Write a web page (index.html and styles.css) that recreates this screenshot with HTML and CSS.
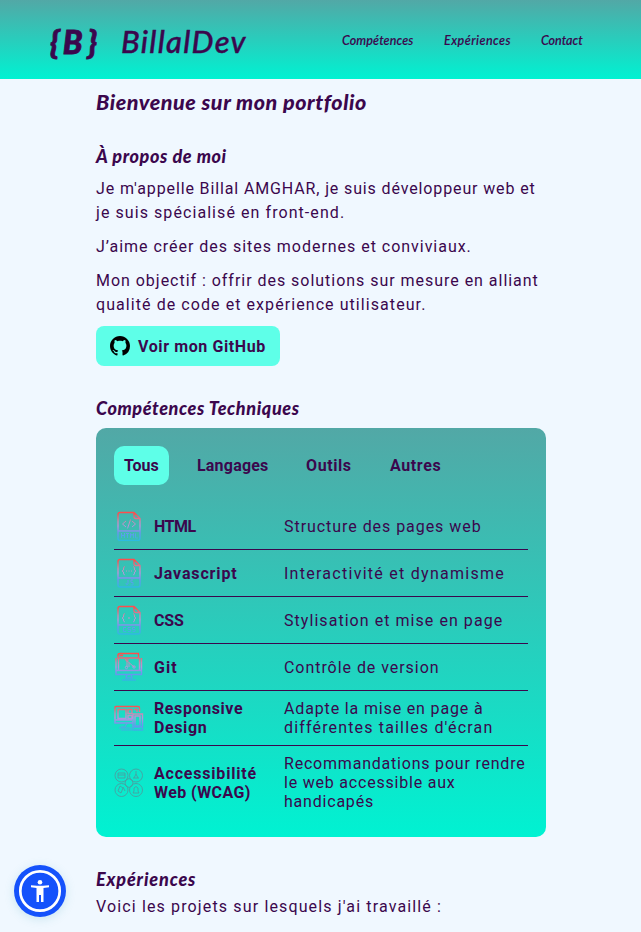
FILE: index.html
```html
<!DOCTYPE html>
<html lang="fr">
<head>
<meta charset="utf-8">
<title>BillalDev</title>
<link rel="stylesheet" href="styles.css">
</head>
<body>
<header class="header">
  <div class="brand"><span class="logo">{<span class="logo-b">B</span>}</span><span class="name">BillalDev</span></div>
  <nav class="nav"><a class="nav-skills">Compétences</a><a class="nav-exp">Expériences</a><a class="nav-contact">Contact</a></nav>
</header>
<main class="main">
  <h1 class="title">Bienvenue sur mon portfolio</h1>
  <section class="about">
    <h2 class="h-about">À propos de moi</h2>
    <p>Je m'appelle Billal AMGHAR, je suis développeur web et<br><span class="wide">je suis spécialisé en front-end.</span></p>
    <p class="mid">J’aime créer des sites modernes et conviviaux.</p>
    <p class="mid">Mon objectif : offrir des solutions sur mesure en alliant<br><span class="wide">qualité de code et expérience utilisateur.</span></p>
    <a class="github"><svg width="20" height="20" viewBox="0 0 16 16"><path d="M8 0C3.58 0 0 3.58 0 8c0 3.54 2.29 6.53 5.47 7.59.4.07.55-.17.55-.38 0-.19-.01-.82-.01-1.49-2.01.37-2.53-.49-2.69-.94-.09-.23-.48-.94-.82-1.13-.28-.15-.68-.52-.01-.53.63-.01 1.08.58 1.23.82.72 1.21 1.87.87 2.33.66.07-.52.28-.87.51-1.07-1.78-.2-3.64-.89-3.64-3.95 0-.87.31-1.59.82-2.15-.08-.2-.36-1.02.08-2.12 0 0 .67-.21 2.2.82.64-.18 1.32-.27 2-.27s1.36.09 2 .27c1.53-1.04 2.2-.82 2.2-.82.44 1.1.16 1.92.08 2.12.51.56.82 1.27.82 2.15 0 3.07-1.87 3.75-3.65 3.95.29.25.54.73.54 1.48 0 1.07-.01 1.93-.01 2.2 0 .21.15.46.55.38A8.01 8.01 0 0 0 16 8c0-4.42-3.58-8-8-8z"/></svg><span>Voir mon GitHub</span></a>
  </section>
  <section class="skills">
    <h2 class="h-skills">Compétences Techniques</h2>
    <div class="card">
      <svg class="defs" width="0" height="0"><defs><linearGradient id="ink" gradientUnits="userSpaceOnUse" x1="0" y1="0" x2="0" y2="30"><stop offset="0.1" stop-color="#ff4d4d"/><stop offset="0.35" stop-color="#c98bb4"/><stop offset="0.5" stop-color="#b596dc"/><stop offset="0.72" stop-color="#6f92f0"/><stop offset="1" stop-color="#27bde0"/></linearGradient></defs></svg>
      <div class="tabs"><span class="tab active">Tous</span><span class="tab t2">Langages</span><span class="tab t3">Outils</span><span class="tab t4">Autres</span></div>
      <ul class="rows">
        <li><svg class="icon" viewBox="0 0 30 30"><path d="M4 20V3.500Q4 1.500 6 1.500H20L26 7.500V27.500Q26 29.500 24 29.500H6Q4 29.500 4 27.500V20H26M20 1.500V5.500Q20 7.500 22 7.500H26"/><path class="fine" d="M12 10L8.500 13L12 16M18 10L21.500 13L18 16M16.500 8.500L13.500 17.500M7.500 22V27M10.500 22V27M7.500 24.500H10.500M12 22.500H15M13.500 22.500V27M16.500 27V22.500L18 24.500L19.500 22.500V27M21.500 22.500V27H24"/></svg><b class="s1">HTML</b><span class="d1">Structure des pages web</span></li>
        <li><svg class="icon" viewBox="0 0 30 30"><path d="M4 20V3.500Q4 1.500 6 1.500H20L26 7.500V27Q26 29 24 29H6Q4 29 4 27V20H26M20 1.500V5.500Q20 7.500 22 7.500H26"/><path class="fine" d="M11 8.500Q9 8.500 9.500 12L8 13L9.500 14Q9 17 11 17M19 8.500Q21 8.500 20.500 12L22 13L20.500 14Q21 17 19 17M12 13H13M14.500 13H15.500M17 13H18M14 22V26Q12 28 12 25M19 22H17V24.500H19V27H16.500"/></svg><b class="s2">Javascript</b><span class="d2">Interactivité et dynamisme</span></li>
        <li><svg class="icon" viewBox="0 0 30 30"><path d="M4 20V3.500Q4 1.500 6 1.500H20L26 7.500V27Q26 29 24 29H6Q4 29 4 27V20H26M20 1.500V5.500Q20 7.500 22 7.500H26"/><path class="fine" d="M11 8.500Q9 8.500 9.500 12L8 13L9.500 14Q9 17 11 17M19 8.500Q21 8.500 20.500 12L22 13L20.500 14Q21 17 19 17M15 12V14M12 22.500H9.500V26.500H12M16.500 22.500H14V24.500H16.500V26.500H14M21 22.500H18.500V24.500H21V26.500H18.500"/></svg><b class="s3">CSS</b><span class="d3">Stylisation et mise en page</span></li>
        <li><svg class="icon" viewBox="0 0 30 30"><path d="M4 7V3Q4 1.500 6 1.500H24.500V6H4M5.500 3.500H9M2 6V22.500H27.500V6M2 18.500H27.500M4.500 6V18M25.500 6V18M13 22.500L12 26H18L17 22.500M8 28H22"/><path class="fine" d="M11 7L20 15M13 9V15M15 10.500V15"/><circle class="fine" cx="13" cy="8" r="1.200"/><circle class="fine" cx="20" cy="15" r="1.200"/><circle class="fine" cx="12.500" cy="15.500" r="1.200"/></svg><b class="s4">Git</b><span class="d1">Contrôle de version</span></li>
        <li><svg class="icon" viewBox="0 0 30 30"><path d="M19 20H1V4.500Q1 3.500 2 3.500H24Q25.500 3.500 25.500 5V9M1 17H18M4 6.500H12V15.500H4ZM14 6.500H18V10.500H14ZM20 6.500H23V9M14 12.500H18V15.500H14ZM18.500 11H28.500V27H19V11M21 13H26V23H21ZM19 24H28"/><path class="fine" d="M13 20L11 24H7M5 25H18M7 27H18"/></svg><b class="s5">Responsive<br>Design</b><span class="d5">Adapte la mise en page à<br><span class="d6">différentes tailles d'écran</span></span></li>
        <li><svg class="icon grey" viewBox="0 0 30 30"><circle cx="7.500" cy="7.500" r="6.500"/><circle cx="22" cy="7.500" r="6.500"/><circle cx="7.500" cy="22" r="6.500"/><circle cx="22" cy="22" r="6.500"/><path d="M4 5H11V10H4ZM4 7H11M22 3V6M20 10L22 6L24 10M19 10H25M6 18L9 20L7 25L4 23ZM9 19L11 23M19 25H25L24 23V20Q22 17 20 20V23ZM12 12Q15 9 18 12M12 18Q15 21 18 18M12 12Q10 15 12 18M18 12Q20 15 18 18"/></svg><b class="s6">Accessibilité<br><span class="s7">Web (WCAG)</span></b><span class="d7">Recommandations pour rendre<br>le web accessible aux<br>handicapés</span></li>
      </ul>
    </div>
  </section>
  <section class="exp">
    <h2 class="h-exp">Expériences</h2>
    <p>Voici les projets sur lesquels j'ai travaillé :</p>
  </section>
</main>
<button class="a11y" aria-label="Accessibilité"><svg width="52" height="52" viewBox="0 0 52 52"><circle cx="26" cy="26" r="26" fill="#1552fb"/><circle cx="26" cy="26" r="19.700" fill="none" stroke="#fff" stroke-width="2.700"/><circle cx="26" cy="17.300" r="2.300" fill="#fff"/><path d="M17 20.300L23 20.800H29L35 20.300V22.300L29.500 23V37H27V30H25V37H22.500V23L17 22.300Z" fill="#fff"/></svg></button>
</body>
</html>
```
FILE: styles.css
```css
* { box-sizing: border-box; }
body { margin: 0; height: 932px; overflow: hidden; background: #f0f8ff; color: #3b074d; font: 16px/24px Roboto, "Noto Sans", sans-serif; }
h1, h2, p, ul { margin: 0; padding: 0; }
h1, h2, p, b, span, a { white-space: nowrap; }
.header { height: 79px; padding: 0 58px 0 50px; display: flex; justify-content: space-between; background: linear-gradient(#52a8a6, #00f2d2); font-family: Lato, sans-serif; font-style: italic; }
.brand { display: flex; gap: 21px; padding-top: 19px; line-height: 44px; }
.logo { font-size: 33px; font-weight: 900; width: 50px; letter-spacing: 3px; -webkit-text-stroke: 0.8px; }
.logo-b { font-size: 32px; letter-spacing: 5px; }
.name { font-size: 31px; font-weight: 500; letter-spacing: 1.3px; -webkit-text-stroke: 0.4px; }
.nav { display: flex; gap: 30px; padding-top: 29px; font-size: 12.5px; font-weight: 600; -webkit-text-stroke: 0.1px; }
.nav-skills { width: 72px; letter-spacing: 0.1px; }
.nav-exp { width: 67px; letter-spacing: 0.45px; }
.nav-contact { width: 42px; }
.main { width: 450px; margin: 0 auto 0 96px; }
h1, h2 { font-family: Lato, sans-serif; font-style: italic; font-weight: 900; }
h1 { font-size: 21.5px; line-height: 28px; padding-top: 9px; letter-spacing: 0.55px; }
h2 { font-size: 18px; line-height: 24px; letter-spacing: 0.6px; }
.h-exp { letter-spacing: 0.85px; }
.about { padding-top: 28px; }
.about p { margin-bottom: 10px; letter-spacing: 0.87px; }
.about .mid { letter-spacing: 0.97px; }
.wide { letter-spacing: 1.07px; }
.about h2 { margin-bottom: 9px; }
.github { display: flex; width: 184px; height: 40px; margin-top: -1px; align-items: center; gap: 8px; padding: 1px 14px 0; border-radius: 8px; background: #5effe8; font-weight: 700; letter-spacing: 0.6px; }
.github svg { flex: none; margin-top: -1px; }
.about .github { margin-top: 9px; }
.about p:nth-of-type(3) { margin-bottom: 0; }
.skills { padding-top: 30px; }
.card { height: 409px; margin-top: 8px; padding: 18px; border-radius: 10px; background: linear-gradient(#52a8a6, #00f2d2); }
.defs { display: block; }
.tabs { display: flex; height: 39px; line-height: 39px; gap: 18px; font-weight: 700; letter-spacing: 0.2px; margin-bottom: 18px; }
.tab { padding: 0 10px; border-radius: 10px; }
.active { background: #5effe8; width: 55px; letter-spacing: 0; }
.t2 { width: 91px; }
.t3 { width: 66px; }
.t3, .t4 { letter-spacing: 0.6px; }
.rows { list-style: none; line-height: 19px; }
.rows li { display: grid; grid-template-columns: 30px 120px 1fr; column-gap: 10px; align-items: center; padding: 8px 0; border-bottom: 1px solid #3b074d; }
.rows li:last-child { border: 0; }
.s1 { letter-spacing: -0.5px; }
.s2 { letter-spacing: 0.85px; }
.s3 { letter-spacing: -0.2px; }
.s4 { letter-spacing: 1px; }
.s5 { letter-spacing: 0.6px; }
.s6 { letter-spacing: 0.8px; }
.s7 { letter-spacing: 0.4px; }
.d1 { letter-spacing: 0.95px; }
.d2 { letter-spacing: 1.27px; }
.d3 { letter-spacing: 1.05px; }
.d5 { letter-spacing: 0.85px; }
.d6 { letter-spacing: 1.16px; }
.d7 { letter-spacing: 0.79px; }
.icon { width: 30px; height: 30px; fill: none; stroke: url(#ink); stroke-width: 1.4; }
.fine { stroke-width: 1; }
.grey { stroke: #4a9fa0; stroke-width: 0.9; }
.exp { padding-top: 30px; }
.exp p { letter-spacing: 1.14px; margin-top: 4px; }
.a11y { position: fixed; left: 14px; top: 865px; width: 52px; height: 52px; padding: 0; border: 0; border-radius: 50%; background: none; box-shadow: 0 2px 10px rgba(90, 180, 190, 0.25); }
.a11y svg { display: block; }
```
